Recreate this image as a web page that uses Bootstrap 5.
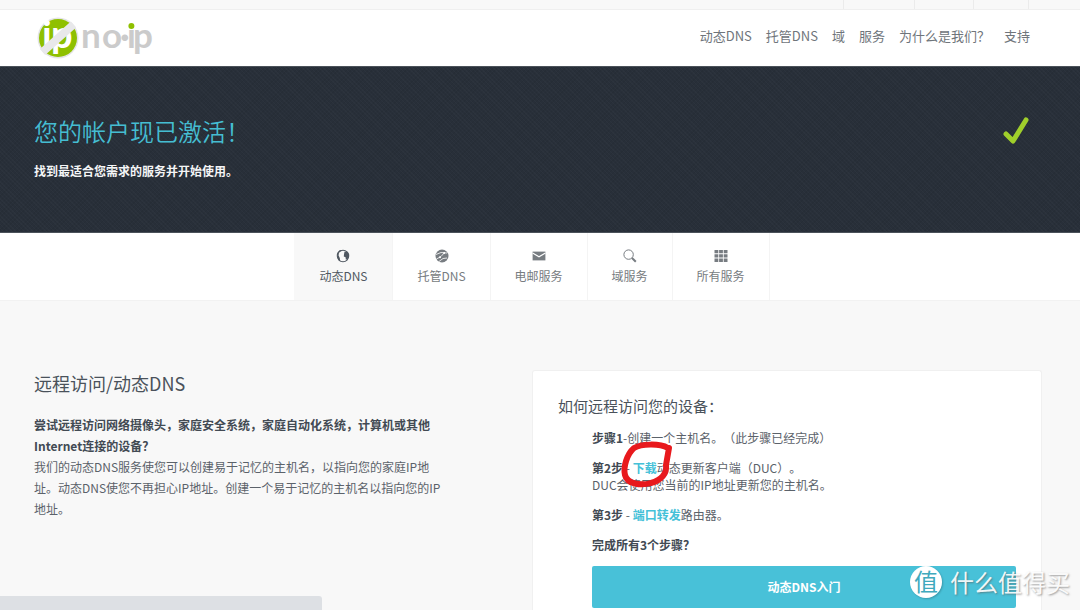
<!DOCTYPE html>
<html lang="zh-CN">
<head>
<meta charset="utf-8">
<meta name="viewport" content="width=device-width, initial-scale=1">
<title>No-IP</title>
<link href="https://cdn.jsdelivr.net/npm/bootstrap@5.3.0/dist/css/bootstrap.min.css" rel="stylesheet">
<style>
body{font-family:"Noto Sans CJK SC",sans-serif;font-size:12px;line-height:17px;color:#5b626a;background:#f8f8f8;text-spacing-trim:space-all;font-feature-settings:"chws" 0}
a{text-decoration:none}
.page-wrap{padding-left:34px;padding-right:50px}
.top-strip{height:10px;background:#f8f8f8;border-bottom:1px solid #efefef;padding-right:51px}
.top-strip span{border-left:1px solid #ebebeb;width:59px}
.top-strip span.wide{width:71px}
.top-strip span.slim{width:55px}
.top-strip span.edge{width:1px}
.site-head{height:56px}
.site-head .nav{gap:14px;font-size:13px;line-height:20px;padding-bottom:4px}
.site-head .nav a{color:#6f757b}
.hero{height:167px;padding-top:48px;background-color:#282f39;
 background-image:repeating-linear-gradient(45deg,rgba(255,255,255,.02) 0 1px,transparent 1px 3px),repeating-linear-gradient(-45deg,rgba(0,0,0,.05) 0 1px,transparent 1px 3px);
 box-shadow:inset 0 1px 0 #4b525a,inset 0 -1px 0 #4b525a}
.hero h1{font-size:24px;line-height:34px;font-weight:350;color:#45bdd2;margin-bottom:14px}
.hero p{color:#f4f5f6;font-weight:700}
.service-tabs{background:#fff;border-bottom:1px solid #f2f2f2}
.service-tabs .tab-item{height:67px;padding:16px 24px 0;border-right:1px solid #f4f4f4;color:#777c81}
.service-tabs .tab-item.active{background:#f8f8f8;color:#505861;padding-left:25px;padding-right:25px}
.service-tabs svg{width:14px;height:14px;margin-bottom:4px}
.main-grid{display:grid;grid-template-columns:498fr 510fr;padding:69px 38px 0 34px}
.intro h2{font-size:18px;line-height:26px;font-weight:400;color:#4a525b;margin-bottom:18px}
.intro p{line-height:21px}
strong{color:#424a53}
.how-card{border:1px solid #f0f0f0;border-bottom:0;border-radius:3px 3px 0 0;padding:23px 25px 0}
.how-card h3{font-size:15px;line-height:24px;font-weight:400;color:#4a525b;margin-bottom:11px}
.steps{padding-left:34px}
.steps p{margin-bottom:13px}
.steps a{color:#45c1d8;font-weight:700}
.btn-start{background:#48c1d8;color:#fff;font-size:12px;font-weight:700;height:42px;border:0;border-radius:2px}
.pen-ring{left:-14px;top:-19px;width:56px;height:52px;pointer-events:none}
.status-bar{left:0;bottom:0;width:322px;height:14px;background:#dde0e4;border-radius:0 3px 0 0}
.watermark{right:10px;bottom:11px;gap:8px;color:rgba(255,255,255,.92);font-size:24px;line-height:34px;text-shadow:1px 1px 2px rgba(90,90,90,.6)}
.watermark .seal{width:32px;height:32px;font-size:24px;line-height:30px;background:#fff;color:#3fa9bd;text-shadow:none;box-shadow:1px 1px 2px rgba(0,0,0,.2)}
</style>
</head>
<body class="vh-100 overflow-hidden position-relative d-flex flex-column">
<div class="top-strip d-flex justify-content-end">
  <span class="wide"></span><span></span><span class="slim"></span><span class="edge"></span>
</div>
<header class="site-head page-wrap bg-white d-flex justify-content-between align-items-center">
  <a href="#" aria-label="no-ip">
    <svg class="d-block" width="124" height="46" viewBox="0 0 124 46" font-family="Lato, sans-serif">
      <circle cx="24" cy="23" r="20.5" fill="#e4e4e6"/>
      <circle cx="24" cy="23" r="19" fill="#8fc000"/>
      <text x="8 17" y="33" font-size="38" font-weight="700" fill="#fff">ip</text>
      <path d="M8.5 37 39.5 9.500" stroke="#e8e8ea" stroke-width="8"/>
      <text x="47 68 86 93 99" y="33" font-size="35" font-weight="700" fill="#cbcbcb">no·ip</text>
      <circle cx="97.400" cy="9.500" r="4.500" fill="#fff"/>
      <circle cx="97.400" cy="11" r="3" fill="#8fc000"/>
    </svg>
  </a>
  <nav class="nav">
    <a href="#">动态DNS</a><a href="#">托管DNS</a><a href="#">域</a><a href="#">服务</a><a href="#">为什么是我们？</a><a href="#">支持</a>
  </nav>
</header>
<section class="hero page-wrap d-flex justify-content-between align-items-start">
  <div><h1>您的帐户现已激活！</h1><p class="mb-0">找到最适合您需求的服务并开始使用。</p></div>
  <svg width="28" height="34" viewBox="0 0 28 34"><path d="M4 20 11 27 24 6" fill="none" stroke="#a0cf2b" stroke-width="5" stroke-linecap="round" stroke-linejoin="round"/></svg>
</section>
<nav class="service-tabs page-wrap d-flex justify-content-center">
  <a href="#" class="tab-item active d-flex flex-column align-items-center">
    <svg viewBox="0 0 14 14"><circle cx="7" cy="7" r="5.7" fill="none" stroke="currentColor" stroke-width="1.1"/><path d="M8.500 2.800 12 3 13 7 11.500 10.500 9.800 10.500 9.600 8.300 7.800 7.400 8 5.200ZM1.200 4 3.500 1.300 6 .9 4.300 2.500 2.800 3.800 2.600 6.500 3.800 9 4.200 12.500 2 10.500Z" fill="currentColor"/></svg>动态DNS</a>
  <a href="#" class="tab-item d-flex flex-column align-items-center">
    <svg viewBox="0 0 14 14"><circle cx="7" cy="7" r="6.5" fill="currentColor"/><path d="M1 5.5 6 3.5 12 4M1.5 10 6 7.5 10 3M4 12.5 8 9.5 12 9" fill="none" stroke="#fff" stroke-width=".8"/><circle cx="5" cy="8.3" r="1" fill="#fff"/><circle cx="9.2" cy="4" r="1" fill="#fff"/></svg>托管DNS</a>
  <a href="#" class="tab-item d-flex flex-column align-items-center">
    <svg viewBox="0 0 14 14"><path d="M.6 2.6H13.4V11.4H.6Z" fill="currentColor"/><path d="M.6 4 7 7.8 13.4 4" fill="none" stroke="#fff" stroke-width="1.2"/></svg>电邮服务</a>
  <a href="#" class="tab-item d-flex flex-column align-items-center">
    <svg viewBox="0 0 14 14" fill="none" stroke="currentColor"><circle cx="5.6" cy="5.6" r="4.700"/><path d="M9 9 12.8 12.8" stroke-width="2"/></svg>域服务</a>
  <a href="#" class="tab-item d-flex flex-column align-items-center">
    <svg viewBox="0 0 14 14" fill="currentColor"><path d="M.5 1H4.3V4.3H.5ZM5.1 1H8.9V4.3H5.1ZM9.7 1H13.5V4.3H9.7ZM.5 5.3H4.3V8.6H.5ZM5.1 5.3H8.9V8.6H5.1ZM9.7 5.3H13.5V8.6H9.7ZM.5 9.6H4.3V12.9H.5ZM5.1 9.6H8.9V12.9H5.1ZM9.7 9.6H13.5V12.9H9.7Z"/></svg>所有服务</a>
</nav>
<main class="main-grid flex-grow-1">
  <section class="intro">
    <h2>远程访问/动态DNS</h2>
    <p class="text-nowrap mb-0"><strong>尝试远程访问网络摄像头，家庭安全系统，家庭自动化系统，计算机或其他<br>Internet连接的设备？</strong><br>我们的动态DNS服务使您可以创建易于记忆的主机名，以指向您的家庭IP地<br>址。动态DNS使您不再担心IP地址。创建一个易于记忆的主机名以指向您的IP<br>地址。</p>
  </section>
  <section class="how-card bg-white">
    <h3>如何远程访问您的设备：</h3>
    <div class="steps">
      <p><strong>步骤1</strong>-创建一个主机名。（此步骤已经完成）</p>
      <p><strong>第2步</strong> - <span class="position-relative"><a href="#">下载</a><svg class="pen-ring position-absolute" viewBox="0 0 56 52" fill="none"><path d="M49 8C40 3 22 4 15 8 8 14 4 27 6 35 8 44 22 46 32 43 43 40 48 33 47 25L50 8" stroke="#e8191d" stroke-width="6" stroke-linecap="round" stroke-linejoin="round"/></svg></span>动态更新客户端（DUC）。<br>DUC会使用您当前的IP地址更新您的主机名。</p>
      <p><strong>第3步</strong> - <a href="#">端口转发</a>路由器。</p>
      <p><strong>完成所有3个步骤？</strong></p>
      <button type="button" class="btn btn-start w-100">动态DNS入门</button>
    </div>
  </section>
</main>
<div class="status-bar position-absolute"></div>
<div class="watermark position-absolute d-flex align-items-center">
  <span class="seal rounded-circle text-center">值</span><span>什么值得买</span>
</div>
<script src="https://cdn.jsdelivr.net/npm/bootstrap@5.3.0/dist/js/bootstrap.bundle.min.js"></script>
</body>
</html>
